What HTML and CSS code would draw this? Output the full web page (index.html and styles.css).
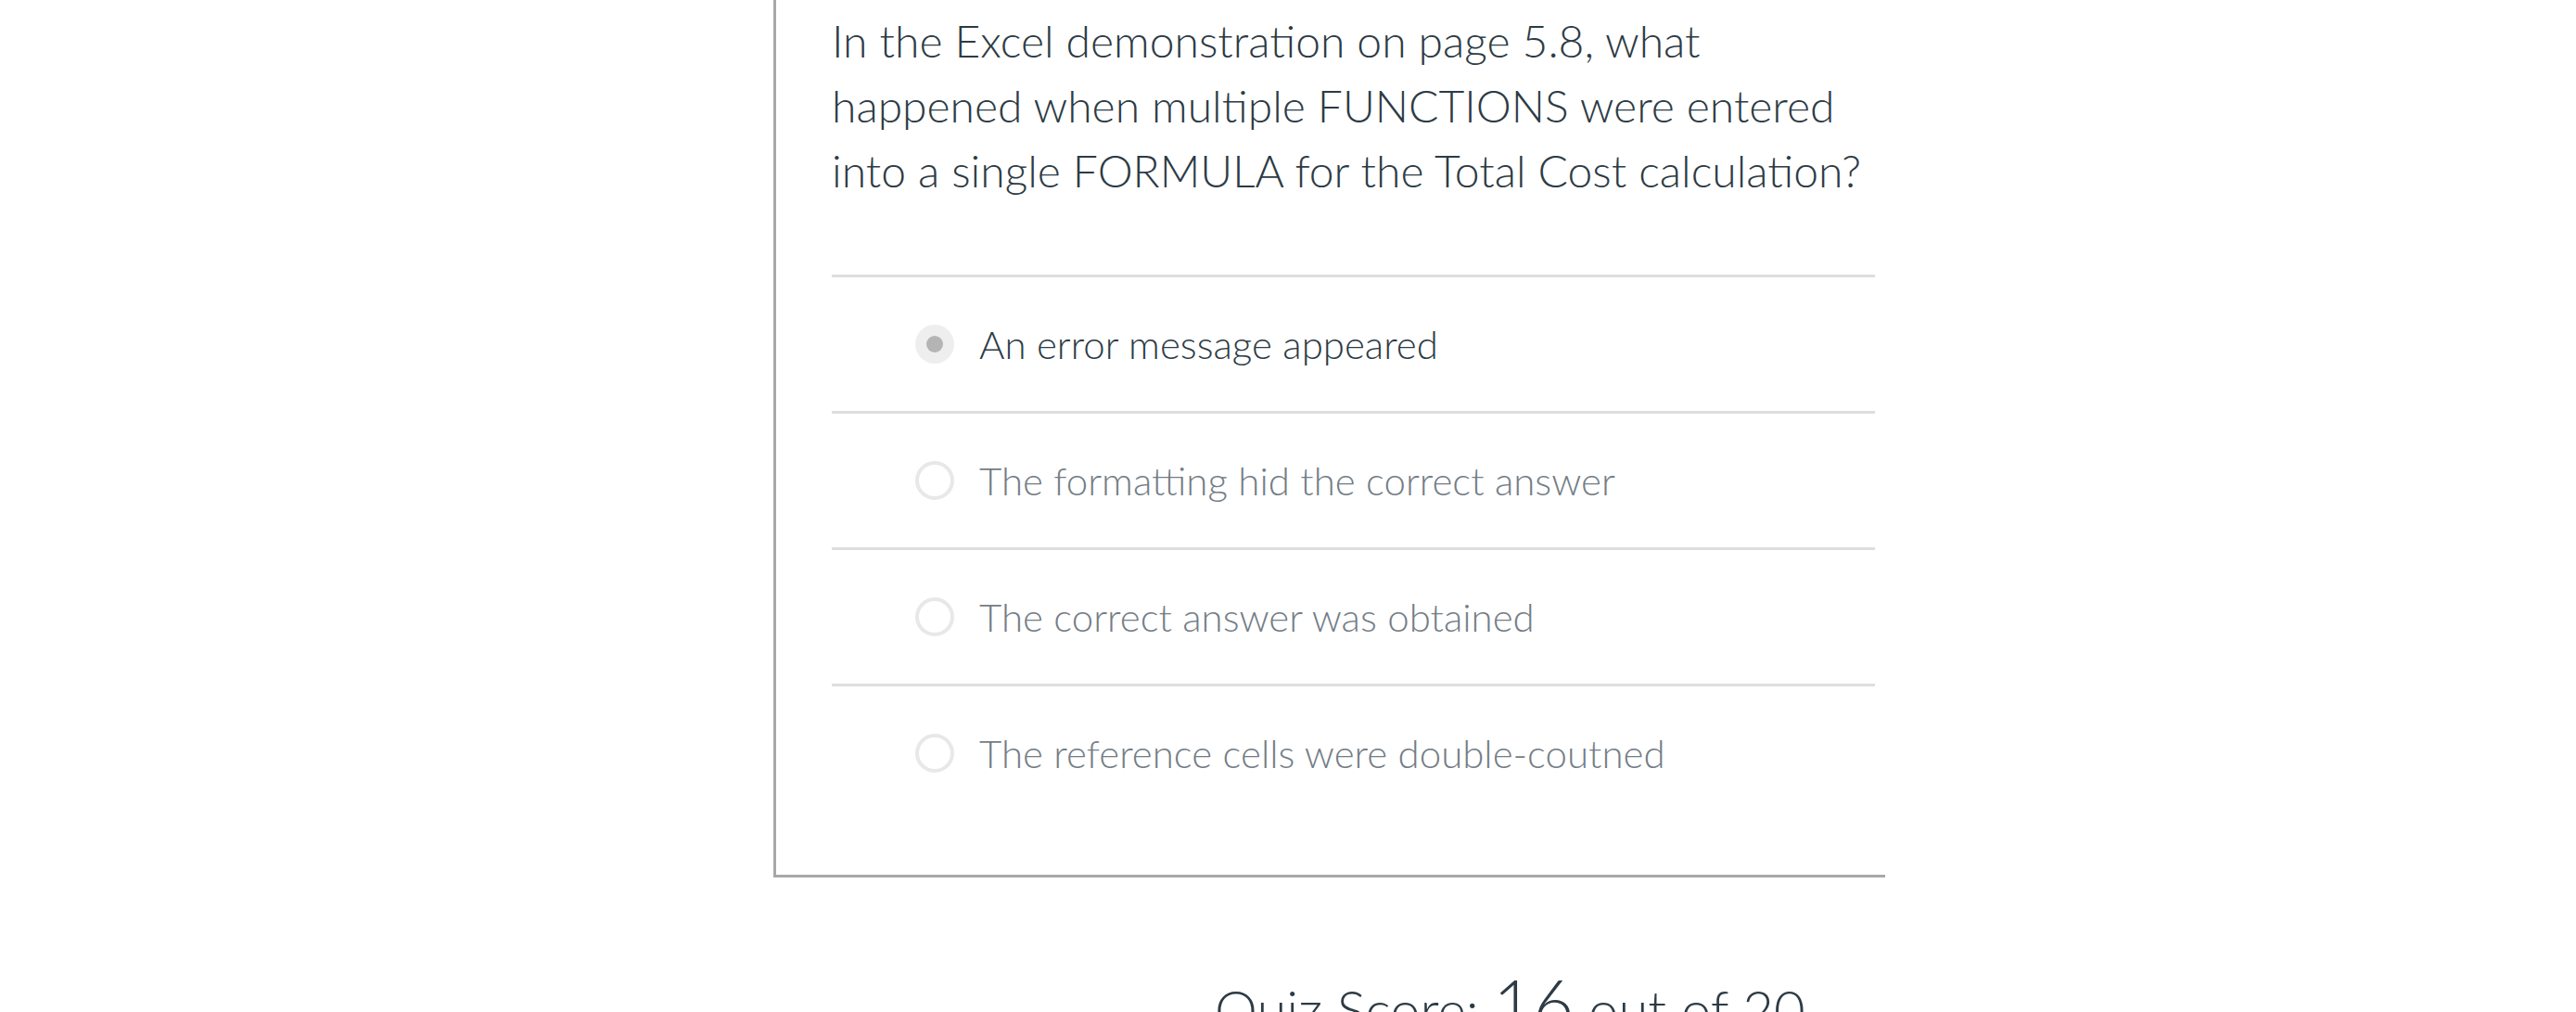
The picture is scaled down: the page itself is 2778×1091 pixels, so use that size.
FILE: index.html
```html
<!DOCTYPE html>
<html lang="en">
<head>
<meta charset="utf-8">
<title>Quiz</title>
<link rel="stylesheet" href="styles.css">
</head>
<body>
<div class="page">
  <section class="card">
    <div class="question">In the Excel demonstration on page 5.8, what happened when multiple FUNCTIONS were entered into a single FORMULA for the Total Cost calculation?</div>
    <div class="answers">
      <div class="answer selected">
        <span class="radio"><span class="dot"></span></span>
        <span class="label">An error message appeared</span>
      </div>
      <div class="answer">
        <span class="radio"></span>
        <span class="label">The formatting hid the correct answer</span>
      </div>
      <div class="answer">
        <span class="radio"></span>
        <span class="label">The correct answer was obtained</span>
      </div>
      <div class="answer">
        <span class="radio"></span>
        <span class="label">The reference cells were double-coutned</span>
      </div>
    </div>
  </section>
  <div class="score">Quiz Score: <span class="num">16</span> out of 20</div>
</div>
</body>
</html>
```
FILE: styles.css
```css
html, body {
  margin: 0;
  padding: 0;
  background: #ffffff;
}
body {
  font-family: "Lato Light", Lato, "Noto Sans", sans-serif;
  font-weight: 300;
  color: #2d3b45;
  overflow: hidden;
}
.page {
  padding-left: 834px;
  width: 1199px;
}
.card {
  border-left: 3px solid #a8a8a8;
  border-bottom: 3px solid #a8a8a8;
  padding: 9px 11px 59px 60px;
}
.question {
  font-size: 48px;
  line-height: 70px;
  width: 1140px;
  margin-right: -15px;
  padding-bottom: 77px;
}
.answer {
  display: flex;
  align-items: center;
  height: 144px;
  border-top: 3px solid #dedede;
  padding-left: 90px;
}
.radio {
  box-sizing: border-box;
  width: 42px;
  height: 42px;
  border-radius: 50%;
  border: 4px solid #e8e8e8;
  background: #ffffff;
  display: flex;
  align-items: center;
  justify-content: center;
  flex: none;
}
.selected .radio {
  border: none;
  background: #eeeeee;
}
.dot {
  width: 18px;
  height: 18px;
  border-radius: 50%;
  background: #b4b4b4;
}
.label {
  margin-left: 27px;
  font-size: 42px;
  color: #747d86;
}
.selected .label {
  color: #2d3b45;
}
.score {
  padding-left: 476px;
  margin-top: 95px;
  font-size: 58px;
  line-height: 80px;
  color: #2d3b45;
  white-space: nowrap;
}
.score .num {
  font-size: 75px;
  line-height: 80px;
}
```
